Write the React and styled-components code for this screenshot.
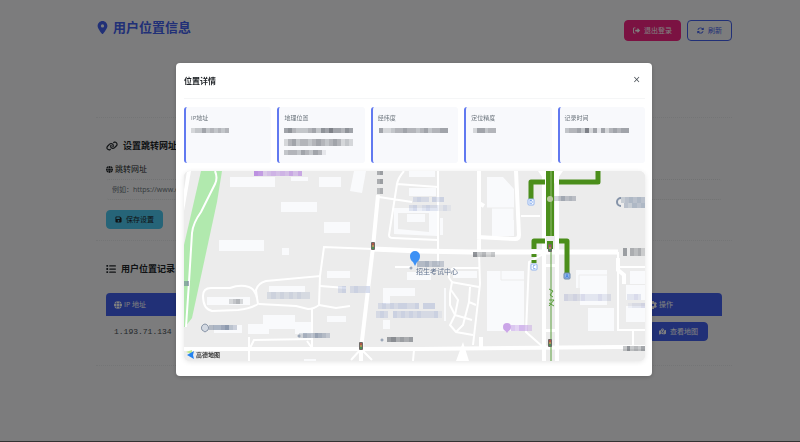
import React from 'react';
import styled, { createGlobalStyle } from 'styled-components';
import {
    FaLocationDot, FaRightFromBracket, FaRotate, FaLink, FaGlobe,
    FaFloppyDisk, FaList, FaGear, FaMapLocationDot,
} from 'react-icons/fa6';

const GlobalStyle = createGlobalStyle`
    * {
        box-sizing: border-box;
    }
    body {
        margin: 0;
        background: #f8f9fa;
        color: #212529;
        font-family: "Open Sans", "Noto Sans CJK SC", sans-serif;
        font-size: 7px;
    }
    button, input {
        font-family: inherit;
    }
`;
const Page = styled.div`
    min-height: 100vh;
    padding: 15px 68px 0 96px;
    border-bottom: 1px solid #666;
`;
const Header = styled.header`
    display: flex;
    align-items: flex-start;
    justify-content: space-between;
    height: 103px;
    border-bottom: 1px dotted #e9ebec;
`;
const PageTitle = styled.h1`
    display: flex;
    align-items: center;
    gap: 4px;
    margin: 0;
    color: #4361ee;
    font-size: 13px;
    line-height: 24px;
`;
const Actions = styled.div`
    display: flex;
    gap: 6px;
    padding-top: 5px;
`;
const Button = styled.button`
    display: inline-flex;
    align-items: center;
    gap: 4px;
    height: ${({ $small }) => ($small ? '19px' : '21px')};
    padding: 0 ${({ $pad }) => $pad || '9px'};
    border: 1px solid ${({ $border, $bg }) => $border || $bg};
    border-radius: 4px;
    background: ${({ $bg }) => $bg};
    color: ${({ $color }) => $color || 'white'};
    font-size: 7px;
    line-height: 10px;
    white-space: nowrap;
`;
const Section = styled.section`
    padding: 21px 10px ${({ $bottom }) => $bottom || '11px'};
    border-bottom: 1px dotted #e9ebec;
`;
const SectionTitle = styled.h2`
    display: flex;
    align-items: center;
    gap: 5px;
    margin: 0;
    font-size: 9px;
    line-height: 14px;

    svg {
        font-size: ${({ $icon }) => $icon || '12px'};
    }
`;
const Label = styled.label`
    display: flex;
    align-items: center;
    gap: 2px;
    margin-top: 10px;
    font-size: 8px;
    line-height: 12px;

    svg {
        font-size: 7px;
    }
`;
const TextInput = styled.input`
    display: block;
    width: 100%;
    height: 21px;
    margin: 4px 0 10px;
    padding: 0 5px;
    border: 1px dotted transparent;
    border-color: #e2e4e6 transparent;
    border-radius: 3px;
    background: transparent;
    font-size: 7px;

    &::placeholder {
        color: #6c757d;
        opacity: 1;
    }
`;
const Table = styled.table`
    width: 100%;
    margin-top: 17px;
    border-collapse: separate;
    border-spacing: 0;
    text-align: left;
`;
const TH = styled.th`
    width: ${({ $width }) => $width || 'auto'};
    height: 23px;
    padding: 0 8px;
    background: #4361ee;
    color: white;
    font-size: 7px;
    font-weight: 400;

    &:first-child {
        border-top-left-radius: 4px;
    }
    &:last-child {
        border-top-right-radius: 4px;
    }
`;
const HeadLabel = styled.span`
    display: flex;
    align-items: center;
    gap: 2px;
    line-height: 10px;

    svg {
        font-size: 8px;
    }
`;
const TD = styled.td`
    height: 31px;
    padding: 0 8px;
    color: ${({ $mono }) => ($mono ? '#495057' : 'inherit')};
    font-family: ${({ $mono }) => ($mono ? '"Liberation Mono", monospace' : 'inherit')};
    font-size: ${({ $mono }) => ($mono ? '8px' : '7px')};
`;
const Overlay = styled.div`
    position: fixed;
    inset: 0;
    display: flex;
    align-items: center;
    padding: 0 148px 3px 176px;
    background: rgba(0, 0, 0, 0.5);
`;
const Modal = styled.div`
    flex: 1;
    min-width: 0;
    padding: 0 7px 15px 8px;
    border-radius: 4px;
    background: white;
    box-shadow: 0 1px 4px rgba(0, 0, 0, 0.2);
`;
const ModalHeader = styled.div`
    display: flex;
    align-items: center;
    justify-content: space-between;
    height: 36px;
    margin-bottom: 8px;
    padding-right: 2px;
    border-bottom: 1px solid #f5f6f7;
`;
const ModalTitle = styled.h3`
    margin: 0;
    font-size: 8px;
    line-height: 12px;
`;
const CloseButton = styled.button`
    padding: 0 3px 2px;
    border: 0;
    background: none;
    color: #495057;
    font-size: 12px;
    line-height: 14px;
`;
const InfoGrid = styled.div`
    display: grid;
    grid-template-columns: repeat(5, 1fr);
    gap: 6px;
    margin-bottom: 8px;
`;
const InfoCard = styled.div`
    min-width: 0;
    height: 56px;
    padding: 6px 5px;
    border-left: 2px solid #6179f0;
    border-radius: 3px;
    background: #f8f9fc;
    overflow: hidden;
`;
const InfoLabel = styled.div`
    margin-bottom: 4px;
    color: #6c757d;
    font-size: 6px;
    line-height: 10px;
`;
const Masked = styled.svg`
    display: block;
`;
const MapBox = styled.div`
    border-radius: 6px;
    background: #ececec;
    box-shadow: 0 1px 5px rgba(0, 0, 0, 0.1);
    overflow: hidden;
`;
const MapSvg = styled.svg`
    display: block;
    width: 100%;
    height: auto;
    font-family: "Noto Sans CJK SC", sans-serif;
`;

// each digit is the strength of one masked cell, 0 leaves it empty
const Mosaic = ({ x, y, w, h, code, color = '#4a4f57', vertical }) => {
    const cells = code.split('');
    const step = (vertical ? h : w) / cells.length;
    return (
        <g fill={color} shapeRendering="crispEdges">
            {cells.map((c, i) => (
                <rect
                    key={i}
                    x={vertical ? x : x + i * step}
                    y={vertical ? y + i * step : y}
                    width={vertical ? w : step}
                    height={vertical ? step : h}
                    opacity={c / 10}
                />
            ))}
        </g>
    );
};

const infoCards = [
    { label: 'IP地址', rows: [{ x: 0, w: 38, code: '2335343434' }] },
    {
        label: '地理位置',
        rows: [
            { x: 0, w: 69, code: '56433345365755465' },
            { x: 0, w: 69, h: 7, code: '24534434543454232' },
            { x: 0, w: 42, code: '3443543541' },
        ],
    },
    { label: '经纬度', rows: [{ x: 1, w: 69, code: '52234454434534455' }] },
    { label: '定位精度', rows: [{ x: 2, w: 23, code: '255344' }] },
    { label: '记录时间', rows: [{ x: 0, w: 64, code: '3445372515245455' }] },
];

const buildings = [
    [230, 177, 45, 10], [291, 177, 17, 4], [319, 177, 22, 10], [281, 202, 36, 10],
    [324, 222, 26, 11], [219, 240, 45, 11], [282, 248, 7, 7], [207, 297, 43, 8],
    [269, 286, 36, 6], [327, 271, 23, 7], [214, 325, 28, 8], [327, 316, 19, 6],
    [409, 171, 26, 6], [409, 188, 27, 8], [440, 218, 3, 17], [383, 288, 32, 8],
    [383, 296, 7, 8], [383, 320, 7, 9], [407, 272, 24, 8], [453, 271, 24, 7],
    [444, 288, 2, 33], [487, 271, 37, 60], [588, 308, 26, 23], [630, 271, 15, 13],
    [626, 285, 19, 15], [626, 306, 19, 16], [304, 359, 12, 2],
];

const mosaics = [
    { x: 254, y: 171, w: 48, h: 5, code: '87345454646', color: '#b07ade' },
    { x: 229, y: 299, w: 14, h: 5, code: '2342' },
    { x: 267, y: 292, w: 43, h: 7, code: '2323232322', color: '#8494b8' },
    { x: 209, y: 325, w: 28, h: 5, code: '4556743', color: '#60718d' },
    { x: 299, y: 333, w: 31, h: 5, code: '25446543', color: '#60718d' },
    { x: 377, y: 171, w: 6, h: 4, code: '45' },
    { x: 377, y: 179, w: 6, h: 5, code: '45' },
    { x: 377, y: 188, w: 6, h: 6, code: '34' },
    { x: 413, y: 197, w: 31, h: 5, code: '23220323', color: '#7f93c8' },
    { x: 409, y: 205, w: 42, h: 6, code: '2312322121', color: '#7f93c8' },
    { x: 473, y: 252, w: 22, h: 5, code: '63423' },
    { x: 417, y: 261, w: 27, h: 6, code: '4453443', color: '#60718d' },
    { x: 338, y: 286, w: 32, h: 7, code: '23023223', color: '#7f93c8' },
    { x: 378, y: 303, w: 57, h: 6, code: '23232332230333', color: '#7f93c8' },
    { x: 376, y: 311, w: 66, h: 7, code: '2320323232322231', color: '#7f93c8' },
    { x: 387, y: 337, w: 26, h: 5, code: '564545' },
    { x: 554, y: 196, w: 22, h: 5, code: '346454', color: '#70798a' },
    { x: 621, y: 197, w: 24, h: 6, code: '345454', color: '#70839d' },
    { x: 624, y: 203, w: 21, h: 5, code: '43545', color: '#70839d' },
    { x: 623, y: 248, w: 22, h: 8, code: '504342' },
    { x: 564, y: 294, w: 47, h: 7, code: '32323222322', color: '#8d96c4' },
    { x: 627, y: 294, w: 14, h: 6, code: '2232', color: '#8d96c4' },
    { x: 628, y: 303, w: 17, h: 5, code: '1223', color: '#8d96c4' },
    { x: 511, y: 325, w: 21, h: 6, code: '43543', color: '#b07ade' },
    { x: 623, y: 346, w: 22, h: 5, code: '363435' },
    { x: 184, y: 281, w: 5, h: 5, code: '56', color: '#60718d' },
];

const trafficLights = [[550, 248], [550, 343], [373, 246], [361, 346]];
const exits = [['D', 531, 202], ['C', 534, 267], ['A', 567, 276]];

const LocationMap = () => (
    <MapSvg viewBox="184 171 461 190" role="img" aria-label="地图">
        <rect x="184" y="171" width="461" height="190" fill="#ececec" />
        <path d="M201 171H222L217 202L192 318L185 327H184V245Z" fill="#b1e9ae" />
        <path d="M187 171H191L184 211V190Z" fill="white" />
        <path d="M215 171Q218 178 215 184L201 212Q193 223 192 233L189 282L186 327" fill="none" stroke="white" strokeWidth="2" />
        <g fill="#f9fafc">
            {buildings.map(([x, y, w, h]) => (
                <rect key={`${x}-${y}`} x={x} y={y} width={w} height={h} />
            ))}
            <path d="M354 171H366L362 193L350 191Z" />
            <path d="M248 324H263V315H295V322H311V334H295V329H269V334H248Z" />
            <path d="M394 208H437V236L394 234Z M398 213V229L429 232V213Z" fillRule="evenodd" />
            <path d="M407 214H425V222H407Z" />
            <path d="M487 177H503L514 189V236H492V208H487Z" />
            <path d="M576 270H607V305H580V288H576Z" />
            <path d="M579 288V275H607" fill="none" stroke="#ececec" />
            <path d="M501 271V280H524 M487 208H514V220" fill="none" stroke="#ececec" />
        </g>
        <g fill="none" stroke="white" strokeWidth="2">
            <path d="M203 296Q203 288 211 288H230Q240 284 249 287Q255 289 257 298L258 304Q250 309 238 310L212 311Q203 309 203 296" />
            <path d="M257 298L256 290Q258 283 266 281L320 276L319 305Q314 309 308 309L296 306L259 304" />
            <path d="M320 276L324 247L373 249 M320 286L346 288 M319 305L336 308L350 306 M312 309V348" />
            <path d="M249 337V361 M250 348L254 340L312 339 M307 341L312 348" />
            <path d="M404 171Q398 178 397 184L389 235Q389 238 393 238L438 240 M438 171V265 M397 184L438 187 M379 197L412 202" />
            <path d="M479 252L480 284L473 345 M449 278Q448 270 454 268H479 M451 282L479 287 M395 267H411" />
            <path d="M449 278L452 282L450 293V305L455 315L450 325L456 332L473 335" />
            <path d="M470 287L469 302L463 325L456 332 M451 290L458 300L455 315L472 320 M469 302L476 305 M414 350L413 361" />
            <path d="M545 253L529 262L526 332L543 347 M521 216H540 M618 252V330H645 M618 267H645 M633 330V347" />
            <path d="M361 349L351 360 M361 349L372 360" />
        </g>
        <g fill="none" stroke="white" strokeWidth="4">
            <path d="M378 195L373 247L361 349V361" />
            <path d="M373 249L420 251L470 252H618" strokeWidth="5" />
            <path d="M184 349H420L617 347H645" />
            <path d="M516 171L519 235Q519 239 515 239L477 237 M479 171V250 M479 203L484 206 M481 337V347" />
            <path d="M544 171V361 M557 171V361" />
            <path d="M618 258V270L624 275V284" />
        </g>
        <path d="M538 171H547V184Z M563 171H554V184Z M456 361H469L463 342Z M545 264H557V267H545Z M545 329H557V332H545Z" fill="white" />
        <g fill="none" stroke="#4b8e1b" strokeWidth="5">
            <path d="M531 199V182H545 M559 182H598V171" strokeLinejoin="round" />
            <path d="M534 249V241H545 M559 241H567V274 M534 254V257 M534 260V263" strokeLinejoin="round" />
            <path d="M550 171V236" strokeWidth="8" />
            <path d="M551 171V236" stroke="#91bd70" strokeWidth="1" />
            <path d="M550 241V249" strokeWidth="6" />
            <path d="M551 248V361" stroke="#5a9e3c" strokeWidth="1" />
        </g>
        <path d="M549 289L553 291L550 295L553 297 M549 300H554M549 303L554 306M554 300L549 306" fill="none" stroke="#5a9e3c" />
        <circle cx="550" cy="199" r="3" fill="#b9c9a0" />
        {mosaics.map((m) => (
            <Mosaic key={`${m.x}-${m.y}`} {...m} />
        ))}
        {trafficLights.map(([x, y]) => (
            <g key={`${x}-${y}`}>
                <rect x={x - 2} y={y - 4} width="4" height="8" rx="1" fill="#6d6965" />
                <circle cx={x} cy={y - 2} r="1" fill="#c65243" />
                <circle cx={x} cy={y} r="1" fill="#c5a34c" />
                <circle cx={x} cy={y + 2} r="1" fill="#3f9c55" />
            </g>
        ))}
        {exits.map(([name, x, y]) => (
            <g key={name}>
                <rect x={x - 3} y={y - 3} width="6" height="6" rx="1" fill={name === 'A' ? '#8fb4e6' : 'white'} stroke={name === 'A' ? '#6d87ab' : '#8fb2ee'} />
                <text x={x} y={y + 2} fontSize="5" textAnchor="middle" fill="#2b6fe0">{name}</text>
            </g>
        ))}
        <path d="M205 324A4 4 0 0 1 208 330L205 332L202 330A4 4 0 0 1 205 324Z" fill="#d3d9e2" stroke="#8a96a8" />
        <circle cx="507" cy="327" r="4" fill="#cba5e8" />
        <path d="M504 329H510L507 333Z" fill="#cba5e8" />
        <path d="M621 198A4 4 0 0 0 621 206" fill="none" stroke="#8593a8" strokeWidth="2" />
        <g fill="white" stroke="#7d8ca3">
            <circle cx="299" cy="336" r="1" />
            <circle cx="382" cy="340" r="1" />
            <circle cx="411" cy="268" r="1" />
        </g>
        <text x="416" y="274" fontSize="7" fill="#60718d">招生考试中心</text>
        <path d="M415 251A5 5 0 0 1 420 256Q420 260 417 262L415 266L413 262Q410 260 410 256A5 5 0 0 1 415 251Z" fill="#3d91f5" />
        <path d="M186 352L192 350V354Z" fill="#bfe88e" />
        <path d="M187 355L194 351L193 355L194 359Z" fill="#2583f0" />
        <text x="196" y="357" fontSize="6" fontWeight="700" fill="#333">高德地图</text>
    </MapSvg>
);

const LocationModal = () => (
    <Overlay>
        <Modal role="dialog" aria-labelledby="modal-title">
            <ModalHeader>
                <ModalTitle id="modal-title">位置详情</ModalTitle>
                <CloseButton type="button">×</CloseButton>
            </ModalHeader>
            <InfoGrid>
                {infoCards.map(({ label, rows }) => (
                    <InfoCard key={label}>
                        <InfoLabel>{label}</InfoLabel>
                        <Masked width="70" height="32" aria-hidden="true">
                            {rows.map((row, index) => (
                                <Mosaic key={index} h={5} y={1 + index * 11} {...row} />
                            ))}
                        </Masked>
                    </InfoCard>
                ))}
            </InfoGrid>
            <MapBox>
                <LocationMap />
            </MapBox>
        </Modal>
    </Overlay>
);

const App = () => {
    return (
        <>
            <GlobalStyle />
            <Page>
                <Header>
                    <PageTitle><FaLocationDot />用户位置信息</PageTitle>
                    <Actions>
                        <Button type="button" $pad="8px" $bg="#f72585"><FaRightFromBracket />退出登录</Button>
                        <Button type="button" $bg="transparent" $border="#4361ee" $color="#4361ee"><FaRotate />刷新</Button>
                    </Actions>
                </Header>
                <Section>
                    <SectionTitle><FaLink />设置跳转网址</SectionTitle>
                    <Label htmlFor="redirect-url"><FaGlobe />跳转网址</Label>
                    <TextInput id="redirect-url" type="text" placeholder="例如：https://www.example.com" />
                    <Button type="button" $small $pad="8px" $bg="#4cc9f0" $color="#212529"><FaFloppyDisk />保存设置</Button>
                </Section>
                <Section $bottom="18px">
                    <SectionTitle $icon="10px"><FaList />用户位置记录</SectionTitle>
                    <Table>
                        <thead>
                            <tr>
                                <TH><HeadLabel><FaGlobe />IP 地址</HeadLabel></TH>
                                <TH $width="81px"><HeadLabel><FaGear />操作</HeadLabel></TH>
                            </tr>
                        </thead>
                        <tbody>
                            <tr>
                                <TD $mono>1.193.71.134</TD>
                                <TD><Button type="button" $small $bg="#4361ee"><FaMapLocationDot />查看地图</Button></TD>
                            </tr>
                        </tbody>
                    </Table>
                </Section>
            </Page>
            <LocationModal />
        </>
    );
};

export default App;
